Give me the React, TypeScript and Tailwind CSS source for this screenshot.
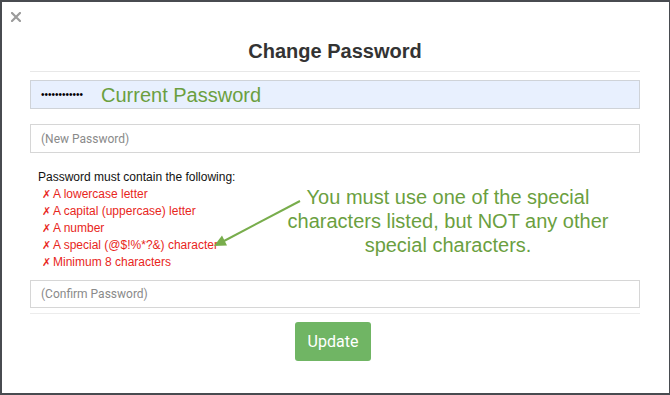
const GREEN = "#6b9f3f";

const rules = [
  "A lowercase letter",
  "A capital (uppercase) letter",
  "A number",
  "A special (@$!%*?&) character",
  "Minimum 8 characters",
];

export default function App() {
  return (
    <div className="relative box-border h-[395px] w-[670px] overflow-hidden border-b-2 border-l-2 border-r border-t-2 border-[#484b50] bg-white font-['Roboto',sans-serif]">
      {/* close */}
      <div className="h-[37px] pl-[9px] pt-[10px]">
        <svg width="10" height="10" viewBox="0 0 10 10" className="text-[#9b9b9b]">
          <path d="M1 1 L9 9 M9 1 L1 9" stroke="currentColor" strokeWidth="2.2" strokeLinecap="square" />
        </svg>
      </div>

      <div className="pl-[28px] pr-[29px]">
        <h1 className="text-center font-['Liberation_Sans',Arial,sans-serif] text-[20px] font-bold leading-[24px] text-[#333]">
          Change Password
        </h1>
        <div className="mt-[8px] h-px bg-[#e8e8e8]" />

        {/* current password (autofilled) */}
        <div className="mt-[8px] flex h-[29px] items-center border border-[#cfd3d8] bg-[#e8f0fe] pl-[10px]">
          <span className="font-['Liberation_Sans',Arial,sans-serif] text-[10px] leading-none text-black">
            ••••••••••••
          </span>
          <span
            className="ml-[18px] font-['Liberation_Sans',Arial,sans-serif] text-[20px] leading-none"
            style={{ color: GREEN }}
          >
            Current Password
          </span>
        </div>

        <input
          readOnly
          placeholder="(New Password)"
          className="mt-[15px] box-border block h-[29px] w-full border border-[#d6d6d6] px-[10px] text-[12px] outline-none placeholder:text-[#8a8a8a]"
        />

        <div className="mt-[16px] pl-[8px] font-['Liberation_Sans',Arial,sans-serif] text-[12px] leading-[17px]">
          <p className="text-[#111]">Password must contain the following:</p>
          <ul>
            {rules.map((r) => (
              <li key={r} className="flex text-[#e8261c]">
                <span className="w-[15px] pl-[4px] font-['DejaVu_Sans',sans-serif] text-[11px] font-bold">✗</span>
                {r}
              </li>
            ))}
          </ul>
        </div>

        <input
          readOnly
          placeholder="(Confirm Password)"
          className="mt-[9px] box-border block h-[28px] w-full border border-[#d6d6d6] px-[10px] text-[12px] outline-none placeholder:text-[#8a8a8a]"
        />
        <div className="mt-[5px] h-px bg-[#ececec]" />

        <div className="mt-[8px] flex justify-center pr-[4px]">
          <button className="h-[39px] w-[76px] rounded-[3px] bg-[#70b564] text-[16px] text-white">
            Update
          </button>
        </div>
      </div>

      {/* annotation overlay */}
      <p
        className="absolute left-[276px] top-[183px] w-[340px] text-center font-['Liberation_Sans',Arial,sans-serif] text-[20px] leading-[24px]"
        style={{ color: GREEN }}
      >
        You must use one of the special
        <br />
        characters listed, but NOT any other
        <br />
        special characters.
      </p>
      <svg className="absolute left-0 top-0" width="670" height="395" viewBox="0 0 670 395">
        <line x1="298" y1="199" x2="222" y2="239" stroke="#78ad4c" strokeWidth="2" />
        <polygon points="212,244 225,243.5 220,233.5" fill="#78ad4c" />
      </svg>
    </div>
  );
}
